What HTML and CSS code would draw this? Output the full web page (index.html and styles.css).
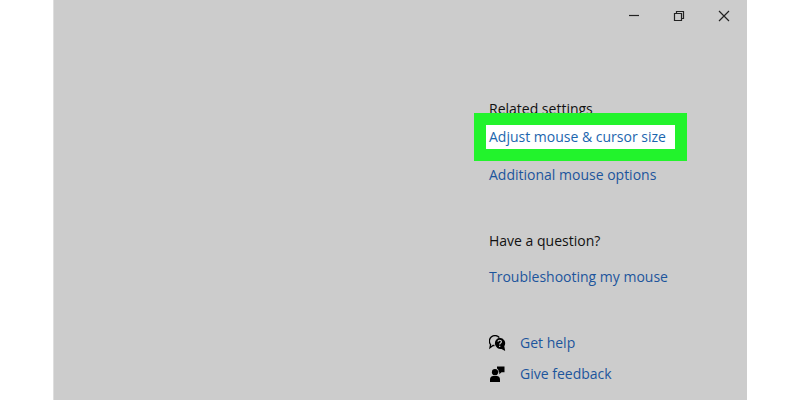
FILE: index.html
```
<!DOCTYPE html>
<html lang="en">
<head>
  <meta charset="UTF-8">
  <meta name="viewport" content="width=device-width, initial-scale=1.0">
  <title>Mouse settings</title>
  <link rel="stylesheet" href="styles.css">
</head>
<body>

  <div class="window">
    <!-- Window controls -->
    <header class="titlebar">
      <button type="button" aria-label="Minimize">
        <svg width="12" height="12" viewBox="0 0 12 12"><path d="M1 5.500h10"/></svg>
      </button>
      <button type="button" aria-label="Restore">
        <svg width="12" height="12" viewBox="0 0 12 12"><path d="M1.500 3.500h7v7h-7zM3.500 3.500v-2h7v7h-2"/></svg>
      </button>
      <button type="button" aria-label="Close">
        <svg width="12" height="12" viewBox="0 0 12 12"><path d="M1 1l10 10M11 1L1 11"/></svg>
      </button>
    </header>

    <aside class="sidebar">
      <section>
        <h2>Related settings</h2>
        <a class="highlight" href="#">Adjust mouse &amp; cursor size</a>
        <a class="link" href="#">Additional mouse options</a>
      </section>

      <section>
        <h2>Have a question?</h2>
        <a class="link" href="#">Troubleshooting my mouse</a>
      </section>

      <section class="support">
        <a href="#">
          <svg width="17" height="17" viewBox="0 0 17 17">
            <path class="outline" d="M5.500 10.500H4L1 12.700l.6-3C-.2 7.400 0 4 2.200 2 4.500 0 8.300 0 10.200 2.500"/>
            <path d="M10.600 2.800a5.500 5.500 0 0 1 4.700 8.400l.9 4.800-3.700-2.100a5.600 5.600 0 1 1-1.900-11.100z"/>
            <path class="mark" d="M9 6.800c0-2.100 3.400-2.100 3.400 0 0 1.300-1.700 1.300-1.700 2.800M10.700 10.700v1.300"/>
          </svg>
          Get help
        </a>
        <a href="#">
          <svg width="17" height="17" viewBox="0 0 17 17">
            <circle cx="6" cy="6.200" r="3.100"/>
            <path d="M1 16v-2.500c0-2 1.300-3.500 3.200-3.500h3.600c1.900 0 3.200 1.500 3.200 3.500V16z"/>
            <path d="M8 .5h7.500v5.700h-3L10.300 8.300V6.200H9.600C9.900 4.500 9.300 3.200 8 2.500z"/>
          </svg>
          Give feedback
        </a>
      </section>
    </aside>
  </div>

</body>
</html>
```
FILE: styles.css
```
* {
  box-sizing: border-box;
}

body {
  margin: 0;
  padding: 0 53px;
  background: #fff;
  font-family: "Open Sans", "Noto Sans", sans-serif;
  font-size: 14px;
  line-height: 24px;
}

.window {
  min-height: 100vh;
  background: #ccc;
  border-left: 1px solid #dedede;
}

.titlebar {
  display: flex;
  justify-content: flex-end;
  padding-right: 1px;
}

.titlebar button {
  display: flex;
  align-items: center;
  justify-content: center;
  width: 45px;
  height: 32px;
  padding: 0;
  border: none;
  background: none;
}

.titlebar svg {
  fill: none;
  stroke: #222;
  stroke-width: 1.2;
}

.sidebar {
  display: flex;
  flex-direction: column;
  gap: 42px;
  width: 258px;
  margin-left: auto;
  padding-top: 65px;
}

.sidebar section {
  display: flex;
  flex-direction: column;
  align-items: flex-start;
}

h2 {
  margin: 0;
  color: #111;
  font-size: 14px;
  font-weight: normal;
}

a {
  color: #1c559c;
  text-decoration: none;
}

a:hover {
  text-decoration: underline;
}

.link {
  margin-top: 12px;
}

/* frame sits over the heading above it */
.highlight {
  position: relative;
  width: 189px;
  margin: 4px 0 2px -3px;
  padding-left: 3px;
  background: #fff;
  color: #1c66ae;
  outline: 12px solid #22f32c;
}

.support {
  gap: 7px;
}

.support a {
  display: flex;
  align-items: center;
  gap: 14px;
}

.support svg {
  fill: #000;
}

.support .outline {
  fill: none;
  stroke: #000;
  stroke-width: 1.3;
}

.support .mark {
  fill: none;
  stroke: #ccc;
  stroke-width: 1.2;
}
```
